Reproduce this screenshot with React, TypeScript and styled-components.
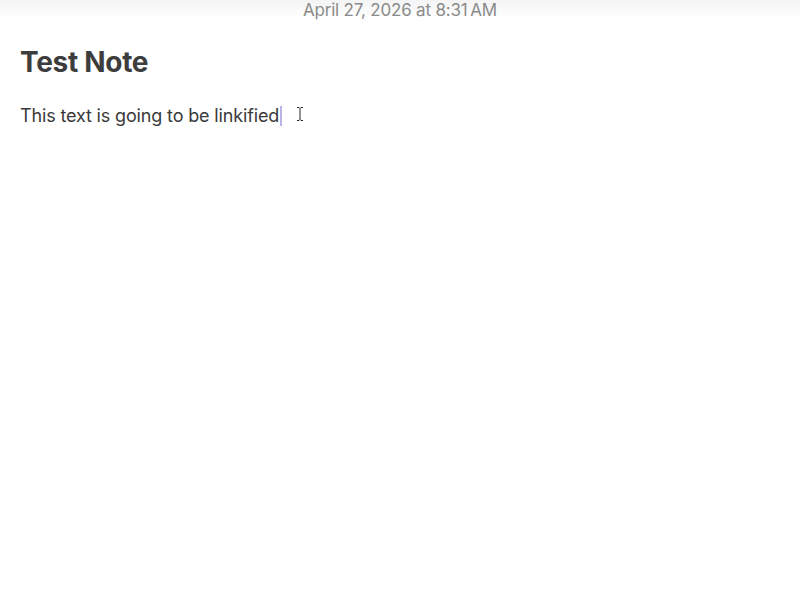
import React from "react";
import styled, { createGlobalStyle } from "styled-components";

const GlobalStyle = createGlobalStyle`
  html, body {
    margin: 0;
    padding: 0;
    background: #ffffff;
  }
  body {
    font-family: Inter, "Noto Sans", "Liberation Sans", sans-serif;
    -webkit-font-smoothing: antialiased;
  }
`;

const Page = styled.div`
  width: 800px;
  height: 601px;
  background: #ffffff;
  overflow: hidden;
  display: flex;
  flex-direction: column;
`;

const DateBar = styled.div`
  height: 20px;
  display: flex;
  justify-content: center;
  align-items: center;
  background: linear-gradient(#f4f4f4, #fbfbfb 60%, #ffffff);
  color: #8b8b8b;
  font-size: 17px;
  letter-spacing: -0.2px;
`;

const Editor = styled.div`
  padding: 24px 20px 0;
  display: flex;
  flex-direction: column;
`;

const Title = styled.h1`
  margin: 0;
  font-size: 28px;
  line-height: 36px;
  font-weight: 700;
  color: #3d3d3d;
  letter-spacing: -0.3px;
`;

const Body = styled.p`
  margin: 23px 0 0;
  font-size: 18px;
  line-height: 26px;
  color: #3a3a3a;
  letter-spacing: -0.15px;
  display: flex;
  align-items: center;
`;

const Caret = styled.span`
  display: inline-block;
  width: 2px;
  height: 20px;
  margin-left: 1px;
  background: #b8b4e8;
`;

const Pointer = styled.svg`
  margin-left: 14px;
  margin-top: -4px;
`;

export default function App() {
  return (
    <>
      <GlobalStyle />
      <Page>
        <DateBar>April 27, 2026 at 8:31{"\u2009"}AM</DateBar>
        <Editor>
          <Title>Test Note</Title>
          <Body>
            This text is going to be linkified
            <Caret />
            <Pointer width="8" height="16" viewBox="0 0 8 16">
              <path
                d="M1 1.5h2l1 1 1-1h2M4 2.5v11M1 14.5h2l1-1 1 1h2"
                fill="none"
                stroke="#222"
                strokeWidth="1"
              />
            </Pointer>
          </Body>
        </Editor>
      </Page>
    </>
  );
}
